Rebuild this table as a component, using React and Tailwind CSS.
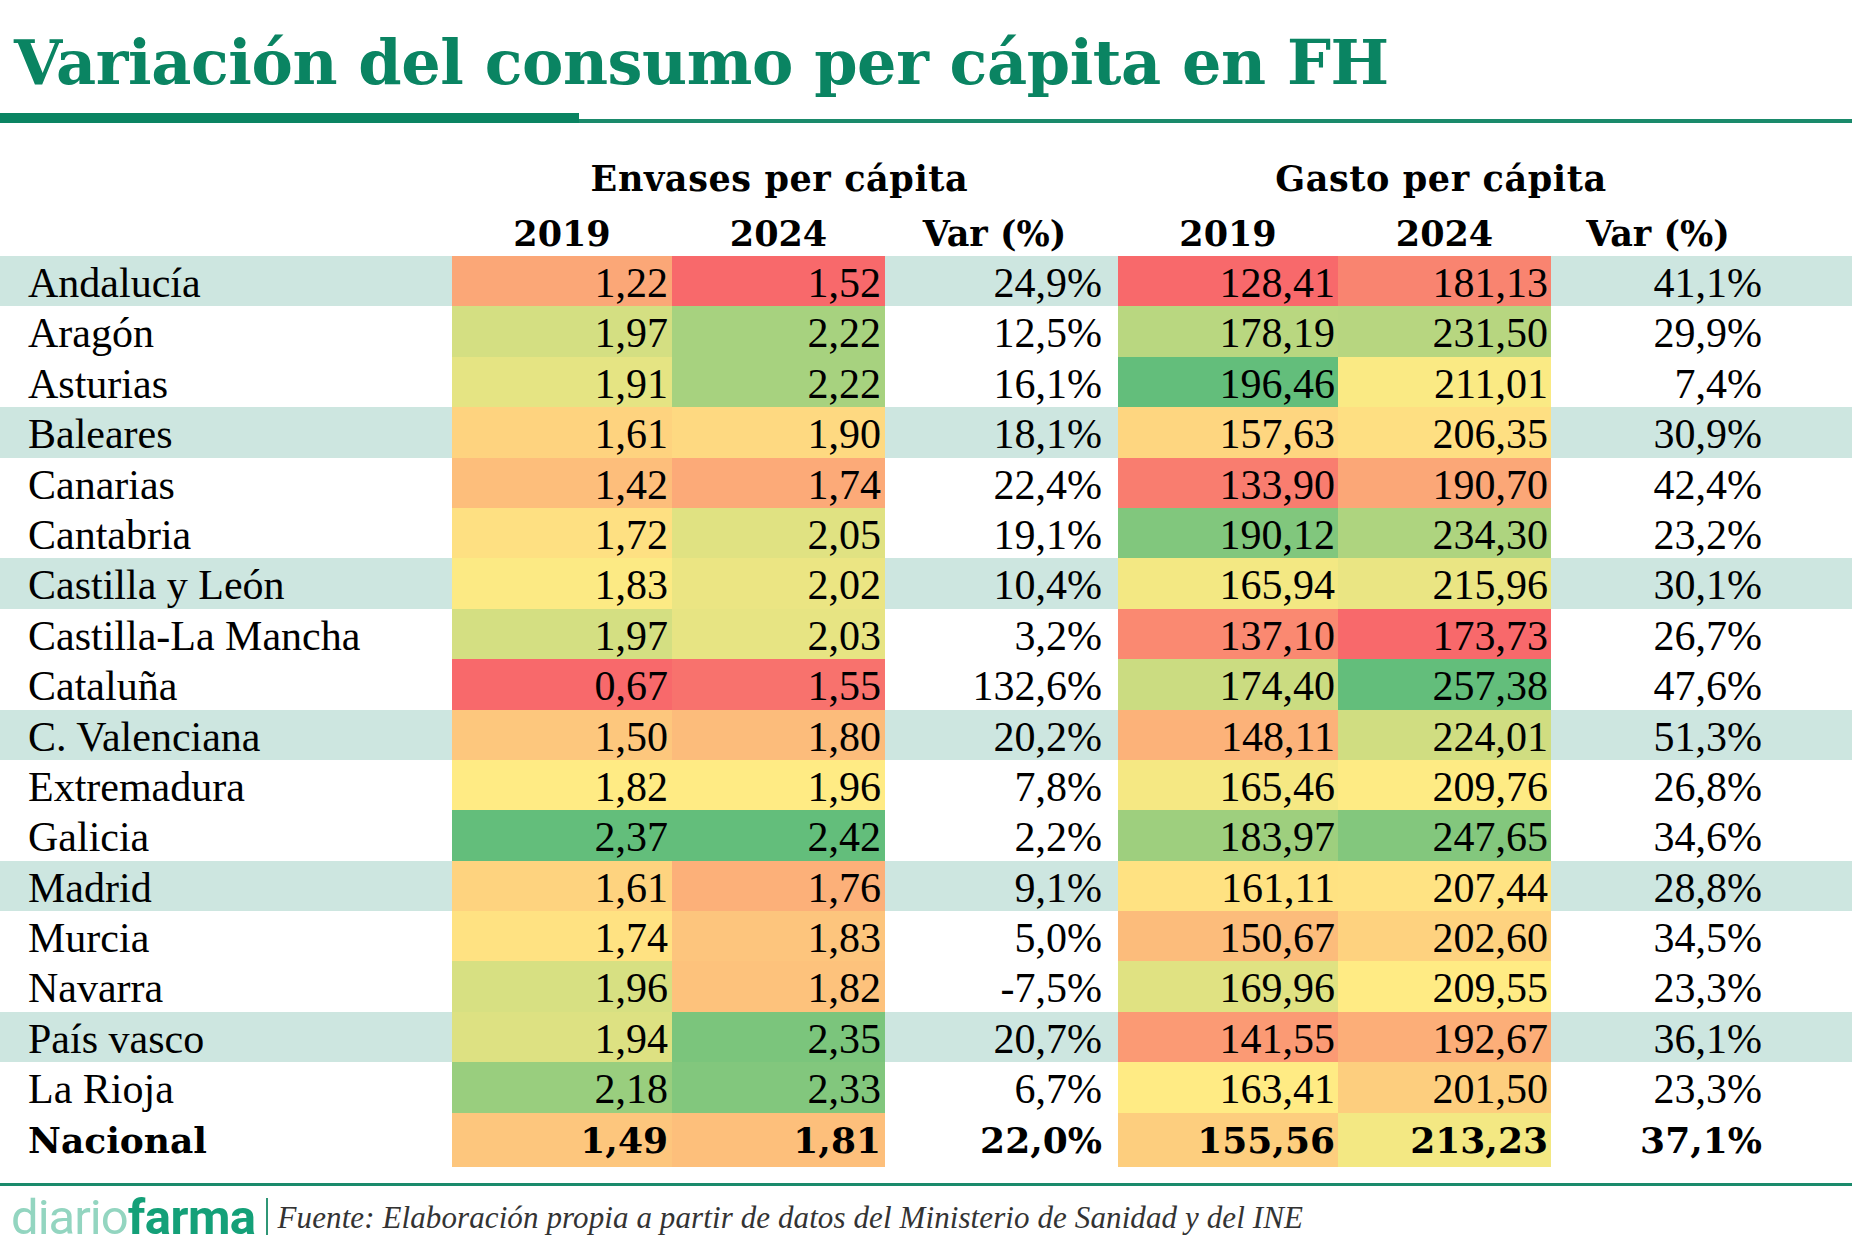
const RED = [248, 105, 107];
const YELLOW = [255, 235, 132];
const GREEN = [99, 190, 123];

const rows = [
  ["Andalucía", 1.22, 1.52, "24,9%", 128.41, 181.13, "41,1%"],
  ["Aragón", 1.97, 2.22, "12,5%", 178.19, 231.5, "29,9%"],
  ["Asturias", 1.91, 2.22, "16,1%", 196.46, 211.01, "7,4%"],
  ["Baleares", 1.61, 1.9, "18,1%", 157.63, 206.35, "30,9%"],
  ["Canarias", 1.42, 1.74, "22,4%", 133.9, 190.7, "42,4%"],
  ["Cantabria", 1.72, 2.05, "19,1%", 190.12, 234.3, "23,2%"],
  ["Castilla y León", 1.83, 2.02, "10,4%", 165.94, 215.96, "30,1%"],
  ["Castilla-La Mancha", 1.97, 2.03, "3,2%", 137.1, 173.73, "26,7%"],
  ["Cataluña", 0.67, 1.55, "132,6%", 174.4, 257.38, "47,6%"],
  ["C. Valenciana", 1.5, 1.8, "20,2%", 148.11, 224.01, "51,3%"],
  ["Extremadura", 1.82, 1.96, "7,8%", 165.46, 209.76, "26,8%"],
  ["Galicia", 2.37, 2.42, "2,2%", 183.97, 247.65, "34,6%"],
  ["Madrid", 1.61, 1.76, "9,1%", 161.11, 207.44, "28,8%"],
  ["Murcia", 1.74, 1.83, "5,0%", 150.67, 202.6, "34,5%"],
  ["Navarra", 1.96, 1.82, "-7,5%", 169.96, 209.55, "23,3%"],
  ["País vasco", 1.94, 2.35, "20,7%", 141.55, 192.67, "36,1%"],
  ["La Rioja", 2.18, 2.33, "6,7%", 163.41, 201.5, "23,3%"],
];

const nacional = ["Nacional", 1.49, 1.81, "22,0%", 155.56, 213.23, "37,1%"];

// excel style 3 colour scale, one per column
const buildScale = (col) => {
  const s = rows.map((r) => r[col]).sort((a, b) => a - b);
  const m = Math.floor(s.length / 2);
  const mid = s.length % 2 ? s[m] : (s[m - 1] + s[m]) / 2;
  return { min: s[0], mid, max: s[s.length - 1] };
};

const scales = { 1: buildScale(1), 2: buildScale(2), 4: buildScale(4), 5: buildScale(5) };

const mix = (a, b, t) => {
  const k = Math.max(0, Math.min(1, t));
  return `rgb(${a.map((v, i) => Math.round(v + (b[i] - v) * k)).join(",")})`;
};

const cellColor = (v, col) => {
  const { min, mid, max } = scales[col];
  if (v <= mid) return mix(RED, YELLOW, (v - min) / (mid - min));
  return mix(YELLOW, GREEN, (v - mid) / (max - mid));
};

const fmt = (n) => n.toFixed(2).replace(".", ",");

const GRID = "grid grid-cols-[452px_220px_213px_233px_220px_213px_227px_1fr]";

const DataRow = ({ row, band, bold }) => (
  <div
    className={`${GRID} h-[50.4px] leading-[54px] ${band ? "bg-[#cde6e0]" : "bg-white"} ${
      bold
        ? "font-['DejaVu_Serif',serif] font-bold text-[36px]"
        : "font-['Liberation_Serif',serif] text-[42px]"
    } text-black`}
  >
    <div className="pl-[28px] whitespace-nowrap">{row[0]}</div>
    {[1, 2].map((c) => (
      <div key={c} className="pr-[4px] text-right" style={{ backgroundColor: cellColor(row[c], c) }}>
        {fmt(row[c])}
      </div>
    ))}
    <div className="pr-[16px] text-right">{row[3]}</div>
    {[4, 5].map((c) => (
      <div key={c} className="pr-[3px] text-right" style={{ backgroundColor: cellColor(row[c], c) }}>
        {fmt(row[c])}
      </div>
    ))}
    <div className="pr-[16px] text-right">{row[6]}</div>
    <div />
  </div>
);

export default function App() {
  return (
    <div className="w-[1852px] h-[1247px] overflow-hidden bg-white">
      {/* Title */}
      <h1 className="h-[113px] pt-[32px] pl-[14px] leading-none whitespace-nowrap font-['DejaVu_Serif',serif] text-[62px] font-bold tracking-[-0.4px] text-[#0a8462]">
        Variación del consumo per cápita en FH
      </h1>
      <div className="flex h-[10px] items-end">
        <div className="h-[10px] w-[579px] bg-[#0a8462]" />
        <div className="h-[4px] flex-1 bg-[#1a8a6b]" />
      </div>

      {/* Headers */}
      <div className="font-['DejaVu_Serif',serif] font-bold text-[35px] text-black">
        <div className={`${GRID} h-[87px] pt-[26px] leading-[60px]`}>
          <div />
          <div className="col-span-3 pr-[11px] text-center whitespace-nowrap tracking-[0.6px]">Envases per cápita</div>
          <div className="col-span-3 pr-[14px] text-center whitespace-nowrap tracking-[0.6px]">Gasto per cápita</div>
          <div />
        </div>
        <div className={`${GRID} h-[46px] leading-[48px]`}>
          <div />
          <div className="text-center">2019</div>
          <div className="text-center">2024</div>
          <div className="pr-[14px] text-center whitespace-nowrap">Var (%)</div>
          <div className="text-center">2019</div>
          <div className="text-center">2024</div>
          <div className="pr-[13px] text-center whitespace-nowrap">Var (%)</div>
          <div />
        </div>
      </div>

      {/* Rows */}
      <div>
        {rows.map((r, i) => (
          <DataRow key={r[0]} row={r} band={i % 3 === 0} />
        ))}
        <DataRow row={nacional} bold />
      </div>

      {/* Footer */}
      <div className="mt-[20px] h-[3px] bg-[#1a8a6b]" />
      <div className="mt-[8px] flex items-start pl-[11px]">
        <div className="h-[48px] leading-[48px] font-['Roboto',sans-serif] text-[49px] whitespace-nowrap">
          <span className="font-normal tracking-[-1px] text-[#93d5c0]">diario</span>
          <span className="font-bold tracking-[-0.5px] text-[#14a078]">farma</span>
        </div>
        <div className="ml-[10px] mt-[4px] h-[37px] w-[2px] bg-[#2f9676]" />
        <div className="ml-[10px] mt-[8px] leading-[31px] font-['Liberation_Serif',serif] text-[31px] italic tracking-[0.1px] text-[#333333] whitespace-nowrap">
          Fuente: Elaboración propia a partir de datos del Ministerio de Sanidad y del INE
        </div>
      </div>
    </div>
  );
}
